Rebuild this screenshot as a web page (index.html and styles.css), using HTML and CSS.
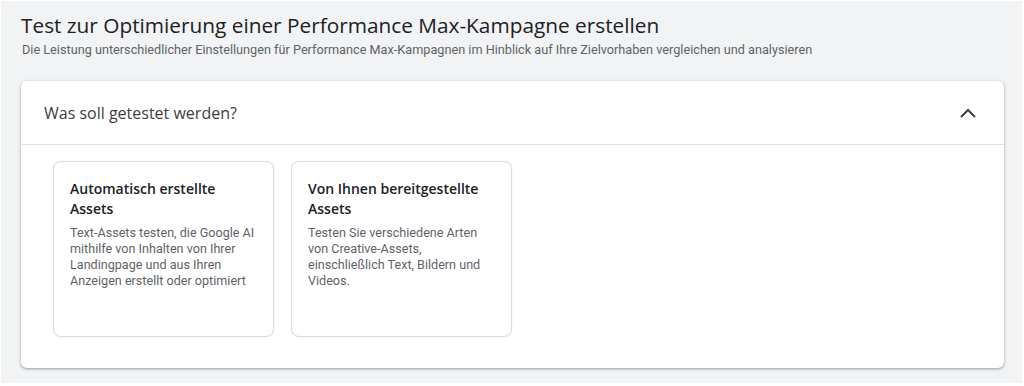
FILE: index.html
```html
<!DOCTYPE html>
<html lang="de">
<head>
    <meta charset="UTF-8" />
    <meta name="viewport" content="width=device-width, initial-scale=1.0"/>
    <title>Test erstellen</title>
    <link rel="stylesheet" href="styles.css">
</head>
<body>
    <div class="page">
        <h1 class="title">Test zur Optimierung einer Performance Max-Kampagne erstellen</h1>
        <p class="subtitle">Die Leistung unterschiedlicher Einstellungen für Performance Max-Kampagnen im Hinblick auf Ihre Zielvorhaben vergleichen und analysieren</p>

        <div class="panel">
            <div class="panel-header">
                <span class="panel-title">Was soll getestet werden?</span>
                <svg class="chevron" width="18" height="12" viewBox="0 0 18 12">
                    <path d="M2 10 9 3l7 7" fill="none" stroke="#3c4043" stroke-width="2"/>
                </svg>
            </div>
            <div class="panel-body">
                <div class="option">
                    <div class="option-title">Automatisch erstellte Assets</div>
                    <div class="option-text">Text-Assets testen, die Google AI mithilfe von Inhalten von Ihrer Landingpage und aus Ihren Anzeigen erstellt oder optimiert</div>
                </div>
                <div class="option">
                    <div class="option-title">Von Ihnen bereitgestellte Assets</div>
                    <div class="option-text">Testen Sie verschiedene Arten von Creative-Assets, einschließlich Text, Bildern und Videos.</div>
                </div>
            </div>
        </div>
    </div>
</body>
</html>
```

FILE: styles.css
```css
body {
    margin: 0;
    background: #fff;
    font-family: Roboto, "Liberation Sans", Arial, sans-serif;
}

.page {
    margin: 1px 2px 3px 1px;
    height: 382px;
    box-sizing: border-box;
    padding: 10px 18px 0 20px;
    background: #f1f3f4;
}

.title {
    margin: 0;
    font-family: "Open Sans", Roboto, sans-serif;
    font-size: 20.8px;
    font-weight: 400;
    line-height: 28px;
    color: #202124;
}

.subtitle {
    margin: 3px 0 0 1px;
    font-size: 12.7px;
    line-height: 16px;
    color: #5f6368;
}

.panel {
    margin-top: 23px;
    background: #fff;
    border-radius: 6px;
    box-shadow: 0 1px 2px rgba(60, 64, 67, 0.3), 0 1px 3px 1px rgba(60, 64, 67, 0.15);
    height: 287px;
}

.panel-header {
    display: flex;
    align-items: center;
    justify-content: space-between;
    height: 63px;
    padding: 0 27px 0 23px;
    border-bottom: 1px solid #e0e0e0;
}

.panel-title {
    font-family: "Open Sans", Roboto, sans-serif;
    font-size: 16px;
    color: #3c4043;
}

.panel-body {
    display: flex;
    gap: 17px;
    padding: 16px 32px;
}

.option {
    width: 221px;
    height: 176px;
    box-sizing: border-box;
    padding: 17px 16px;
    border: 1px solid #d9dbdf;
    border-radius: 8px;
    box-shadow: 0 0 1px rgba(60, 64, 67, 0.2);
}

.option-title {
    font-family: "Open Sans", Roboto, sans-serif;
    font-size: 14px;
    font-weight: 600;
    line-height: 20px;
    color: #202124;
}

.option-text {
    margin-top: 6px;
    font-size: 12.6px;
    line-height: 16px;
    color: #5f6368;
}
```
